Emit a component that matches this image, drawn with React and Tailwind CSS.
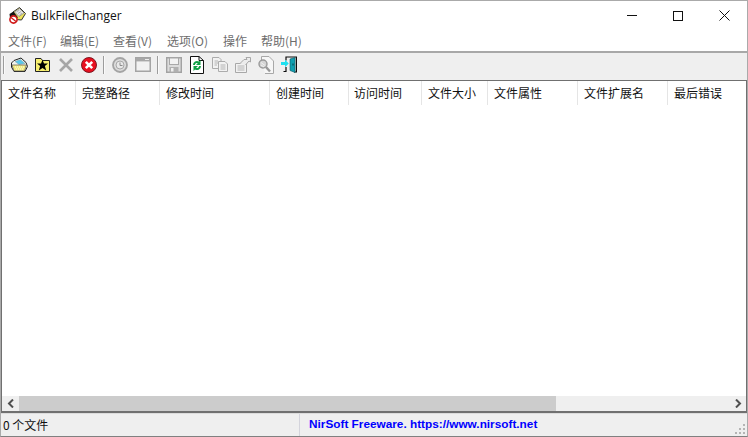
import React from 'react'

const menus = [
  ['文件(F)', 'w-[52px]'],
  ['编辑(E)', 'w-[53px]'],
  ['查看(V)', 'w-[54px]'],
  ['选项(O)', 'w-[56px]'],
  ['操作', 'w-[38px]'],
  ['帮助(H)', 'w-[50px]'],
]

const columns = [
  ['文件名称', 'w-[74px] pl-[6px]'],
  ['完整路径', 'w-[84px] pl-[6px]'],
  ['修改时间', 'w-[110px] pl-[6px]'],
  ['创建时间', 'w-[79px] pl-[6px]'],
  ['访问时间', 'w-[73px] pl-[5px]'],
  ['文件大小', 'w-[66px] pl-[6px]'],
  ['文件属性', 'w-[90px] pl-[6px]'],
  ['文件扩展名', 'w-[90px] pl-[6px]'],
  ['最后错误', 'w-[80px] pl-[6px]'],
]

const AppIcon = () => (
  <svg width="17" height="17" viewBox="0 0 17 17" className="shrink-0">
    <path d="M4 5 L10.5 0.5 L16.5 6.5 L12.5 13 L7 12.5 Z" fill="#ece25c" stroke="#333" />
    <path d="M5.5 5 L10.5 1.5 L15 6 L10 9.5 Z" fill="#e8e8e8" stroke="#808080" strokeWidth="0.7" />
    <path d="M7.5 5 L10.5 3 M9 6.5 L12 4.5 M10.5 8 L13 6" stroke="#9a9a9a" strokeWidth="0.7" />
    <path d="M0.5 7 L4.5 4.5 L9 10.5 L5 12 L1 11 Z" fill="#141414" />
    <circle cx="4.5" cy="12.5" r="3.6" fill="#fff" stroke="#d01818" strokeWidth="1.6" />
    <path d="M2 10.5 L7 14.5" stroke="#d01818" strokeWidth="1.3" />
  </svg>
)

const OpenFolder = () => (
  <svg width="17" height="16" viewBox="0 0 17 16">
    <path d="M0.5 6 L3 3.5 L10 1 L15 5.5 L16.5 9.5 L14 14.5 H3 L0.5 10 Z" fill="#f4f4ec" stroke="#222" />
    <path d="M4 4.5 L9.5 2.5 L14 6.5 L8 7.5 Z" fill="#58c8ec" stroke="#88a0a8" strokeWidth="0.5" />
    <path d="M1 8 H15.5 L13.5 14 H3 Z" fill="#f4ec80" stroke="#555" strokeWidth="0.7" />
    <path d="M4 10 H13 M5 12 H12" stroke="#fffef0" strokeDasharray="1 1" />
  </svg>
)

const StarFolder = () => (
  <svg width="17" height="16" viewBox="0 0 17 16">
    <path d="M1.5 1.5 H7 L8.5 3.5 H15.5 V14.5 H1.5 Z" fill="#f8f070" stroke="#222" />
    <path d="M8.5 2.8 L10 6.6 L14 6.6 L10.9 9 L12.2 13.4 L8.5 10.9 L4.8 13.4 L6.1 9 L3 6.6 L7 6.6 Z" fill="#000" />
  </svg>
)

const GrayX = () => (
  <svg width="16" height="16" viewBox="0 0 16 16">
    <path d="M2 2 L14 14 M14 2 L2 14" stroke="#a6a6a6" strokeWidth="2.6" />
  </svg>
)

const RedStop = () => (
  <svg width="16" height="16" viewBox="0 0 16 16">
    <circle cx="8" cy="8" r="7.5" fill="#e81020" stroke="#701018" strokeWidth="0.9" />
    <path d="M4.8 4.8 L11.2 11.2 M11.2 4.8 L4.8 11.2" stroke="#fff" strokeWidth="2.6" />
  </svg>
)

const Clock = () => (
  <svg width="16" height="16" viewBox="0 0 16 16">
    <circle cx="8" cy="8" r="7" fill="#dcdcdc" stroke="#a4a4a4" strokeWidth="1.8" />
    <circle cx="8" cy="8" r="4" fill="#e8e8e8" stroke="#a8a8a8" />
    <path d="M8 5.5 V8.5 H10.5" stroke="#8c8c8c" fill="none" />
  </svg>
)

const WindowIcon = () => (
  <svg width="16" height="15" viewBox="0 0 16 15">
    <rect x="0.75" y="0.75" width="14.5" height="13.5" fill="#f2f2f2" stroke="#a4a4a4" strokeWidth="1.5" />
    <rect x="1" y="1" width="14" height="3.4" fill="#a8a8a8" />
    <path d="M10 2.5 H14" stroke="#eeeeee" />
  </svg>
)

const Floppy = () => (
  <svg width="16" height="16" viewBox="0 0 16 16">
    <path d="M0.7 0.7 H15.3 V15.3 H0.7 Z" fill="#dcdcdc" stroke="#a2a2a2" strokeWidth="1.4" />
    <rect x="3.5" y="1" width="9" height="6.5" fill="#f2f2f2" stroke="#a8a8a8" />
    <rect x="3.5" y="10" width="9" height="5.5" fill="#b0b0b0" />
    <rect x="5" y="11" width="2.5" height="3.5" fill="#efefef" />
  </svg>
)

const Refresh = () => (
  <svg width="14" height="18" viewBox="0 0 14 18">
    <path d="M0.5 0.5 H9 L13.5 4.5 V17.5 H0.5 Z" fill="#fff" stroke="#111" />
    <path d="M9 0.5 V4.5 H13.5" fill="none" stroke="#111" />
    <path d="M3 9 A4 4 0 0 1 9 5.5 L10.5 4 V9 H6 L7.8 7.2 A2 2 0 0 0 5 9 Z" fill="#0f9f45" />
    <path d="M11 10 A4 4 0 0 1 5 13.5 L3.5 15 V10 H8 L6.2 11.8 A2 2 0 0 0 9 10 Z" fill="#0f9f45" />
  </svg>
)

const Copy = () => (
  <svg width="16" height="15" viewBox="0 0 16 15">
    <path d="M0.5 0.5 H7 L9 2.5 V11.5 H0.5 Z" fill="#f2f2f2" stroke="#acacac" />
    <path d="M6.5 4.5 H13 L15.5 7 V14.5 H6.5 Z" fill="#f2f2f2" stroke="#acacac" />
    <path d="M2.5 4 H6 M2.5 6 H6 M2.5 8 H5 M8.5 8 H13.5 M8.5 10 H13.5 M8.5 12 H13.5" stroke="#b4b4b4" />
  </svg>
)

const Props = () => (
  <svg width="16" height="16" viewBox="0 0 16 16">
    <path d="M0.5 6.5 H11.5 V15.5 H0.5 Z" fill="#f2f2f2" stroke="#a8a8a8" />
    <path d="M2.5 9 H9.5 M2.5 11 H9.5 M2.5 13 H9.5" stroke="#b4b4b4" />
    <path d="M5 6.5 L9 2.5 H12 L11 0.5 H15.5 V5 L14 4 L10.5 8" fill="#ececec" stroke="#a8a8a8" />
  </svg>
)

const Find = () => (
  <svg width="16" height="18" viewBox="0 0 16 18">
    <path d="M3.5 4 V0.5 H11 L15.5 5 V17.5 H7" fill="#f6f6f6" stroke="#a8a8a8" />
    <circle cx="5" cy="8" r="4" fill="#d4d4d4" stroke="#989898" strokeWidth="1.4" />
    <path d="M3 6.5 L7 9.5 M3 9 L6 11" stroke="#f0f0f0" />
    <path d="M8 11 L12 15.5" stroke="#989898" strokeWidth="2.4" />
  </svg>
)

const ExitDoor = () => (
  <svg width="16" height="18" viewBox="0 0 16 18">
    <path d="M5 4.5 V1 H15.4 V16 H13 M5 11 V15.5 H2.5" fill="none" stroke="#0c0c0c" strokeWidth="1.2" />
    <path d="M9 3 L14 1.5 V16.5 L9 14.5 Z" fill="#0f9fb0" stroke="#0a5a66" strokeWidth="0.6" />
    <path d="M11.5 7.5 H12.5 V9.5 H11.5 Z" fill="#063c44" />
    <path d="M0 6 H4 V3.8 L7.8 7.5 L4 11.2 V9 H0 Z" fill="#1ce0f0" />
  </svg>
)

const Sep = ({ first }) => (
  <div className={`${first ? '' : 'ml-[3px]'} mr-[3px] h-[18px] w-[2px] border-l border-[#9c9c9c] bg-[#fafafa]`} />
)

const Tool = ({ children }) => (
  <div className="flex h-[23px] w-[23px] items-center justify-center">{children}</div>
)

export default function App() {
  return (
    <div className="flex h-[437px] w-[748px] flex-col overflow-hidden border border-[#aaaaaa] border-b-[#808080] bg-white text-[12px] text-[#111] font-['Noto_Sans_CJK_SC','Noto_Sans',sans-serif]">
      <div className="flex h-[29px] shrink-0 items-center">
        <div className="ml-[8px] mr-[5px]">
          <AppIcon />
        </div>
        <span className="font-['Open_Sans','Noto_Sans',sans-serif] text-[12px] leading-none">BulkFileChanger</span>
        <div className="ml-auto flex h-full items-center">
          <div className="flex w-[46px] justify-center">
            <div className="h-px w-[10px] bg-[#111]" />
          </div>
          <div className="flex w-[46px] justify-center">
            <div className="h-[10px] w-[10px] border border-[#111]" />
          </div>
          <div className="flex w-[46px] justify-center">
            <svg width="11" height="11" viewBox="0 0 11 11">
              <path d="M0.5 0.5 L10.5 10.5 M10.5 0.5 L0.5 10.5" stroke="#111" strokeWidth="1" />
            </svg>
          </div>
        </div>
      </div>

      <div className="flex h-[21px] shrink-0 items-center pl-[7px] text-[#6d6d6d]">
        {menus.map(([label, width]) => (
          <span key={label} className={width}>{label}</span>
        ))}
      </div>

      <div className="flex h-[29px] shrink-0 items-center border-t-2 border-[#a8a8a8] bg-[#efefef] pb-[4px] pl-[2px]">
        <Sep first />
        <Tool><OpenFolder /></Tool>
        <Tool><StarFolder /></Tool>
        <Tool><GrayX /></Tool>
        <Tool><RedStop /></Tool>
        <Sep />
        <Tool><Clock /></Tool>
        <Tool><WindowIcon /></Tool>
        <Sep />
        <Tool><Floppy /></Tool>
        <Tool><Refresh /></Tool>
        <Tool><Copy /></Tool>
        <Tool><Props /></Tool>
        <Tool><Find /></Tool>
        <Tool><ExitDoor /></Tool>
      </div>

      <div className="flex min-h-0 flex-1 flex-col border border-b-2 border-[#707070] bg-white">
        <div className="flex h-[24px] shrink-0 overflow-hidden">
          {columns.map(([label, width]) => (
            <div key={label} className={`${width} flex shrink-0 items-center border-r border-[#e5e5e5] pb-px`}>
              <span className="whitespace-nowrap leading-none">{label}</span>
            </div>
          ))}
        </div>
        <div className="flex-1" />
        <div className="flex h-[15px] shrink-0 bg-[#efefef]">
          <div className="flex w-[17px] shrink-0 items-center justify-center">
            <svg width="8" height="9" viewBox="0 0 8 9">
              <path d="M6 0.5 L2 4.5 L6 8.5" fill="none" stroke="#505050" strokeWidth="2" />
            </svg>
          </div>
          <div className="w-[537px] shrink-0 bg-[#cccccc]" />
          <div className="flex-1" />
          <div className="flex w-[17px] shrink-0 items-center justify-center">
            <svg width="8" height="9" viewBox="0 0 8 9">
              <path d="M2 0.5 L6 4.5 L2 8.5" fill="none" stroke="#505050" strokeWidth="2" />
            </svg>
          </div>
        </div>
      </div>

      <div className="relative flex h-[23px] shrink-0 border-t border-[#dcdcdc] bg-[#efefef]">
        <div className="flex w-[299px] shrink-0 items-center border-r border-[#d4d4dc] pl-[2px]">0 个文件</div>
        <div className="flex items-center pb-px pl-[9px] font-['Liberation_Sans',sans-serif] text-[11.8px] font-bold text-[#0000ff]">
          NirSoft Freeware. https://www.nirsoft.net
        </div>
        <svg width="12" height="12" viewBox="0 0 12 12" className="absolute bottom-px right-px">
          <path d="M9 1h2v2H9zM5 5h2v2H5zM9 5h2v2H9zM1 9h2v2H1zM5 9h2v2H5zM9 9h2v2H9z" fill="#b4b4b4" />
        </svg>
      </div>
    </div>
  )
}
